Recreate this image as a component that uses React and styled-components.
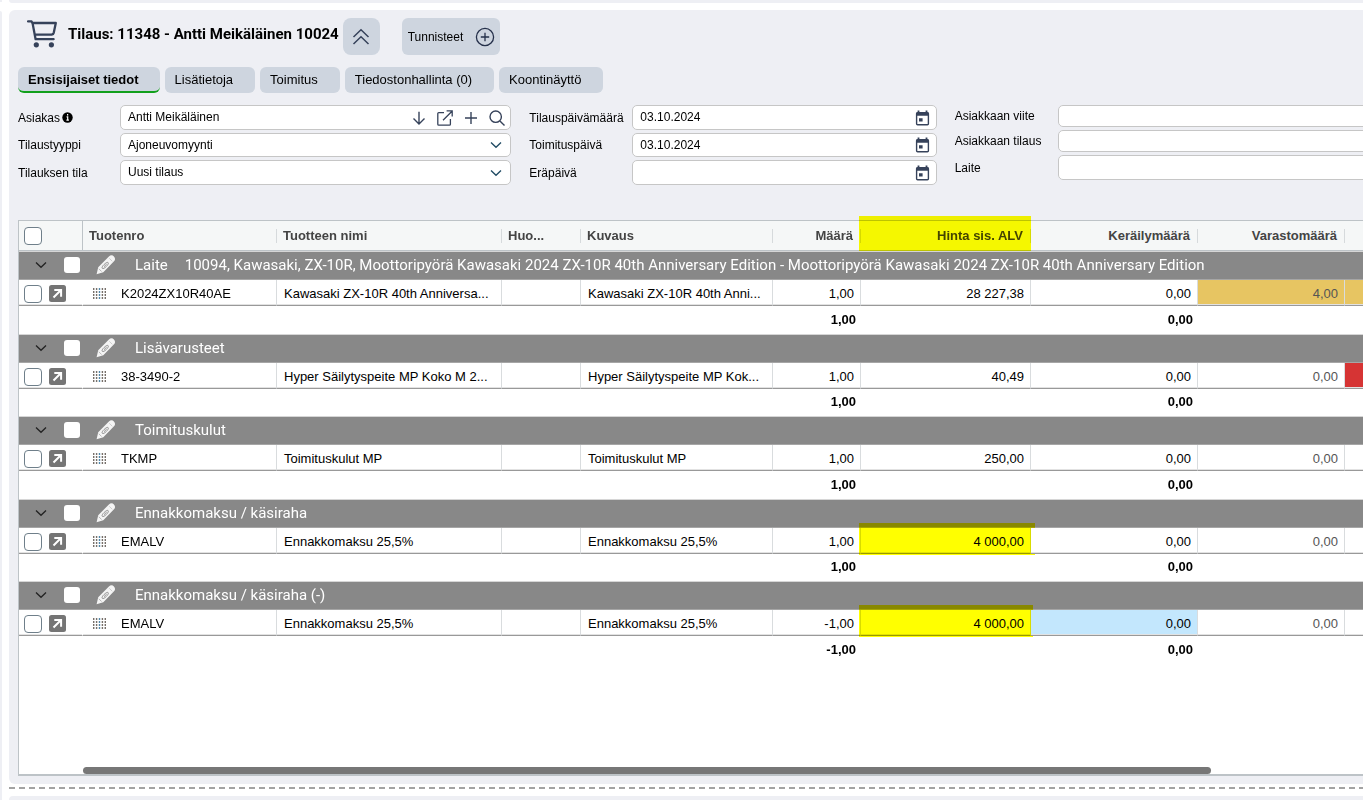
import React from "react";
import styled, { createGlobalStyle } from "styled-components";

const GlobalStyle = createGlobalStyle`
  * {
    box-sizing: border-box;
  }
  body {
    margin: 0;
    background: #fff;
    color: #000;
    font-family: "Liberation Sans", Arial, sans-serif;
    font-size: 12px;
  }
  button, input, select {
    font: inherit;
    color: inherit;
  }
`;

const tabs = [
  "Ensisijaiset tiedot",
  "Lisätietoja",
  "Toimitus",
  "Tiedostonhallinta (0)",
  "Koontinäyttö",
];

const columns = [
  { name: "Tuotenro", width: 194 },
  { name: "Tuotteen nimi", width: 225 },
  { name: "Huomautus", short: "Huo...", width: 79 },
  { name: "Kuvaus", width: 192 },
  { name: "Määrä", width: 88, right: true },
  { name: "Hinta sis. ALV", width: 170, right: true, marked: true },
  { name: "Keräilymäärä", width: 167, right: true },
  { name: "Varastomäärä", width: 147, right: true },
];

const groups = [
  {
    title: "Laite",
    info: "10094, Kawasaki, ZX-10R, Moottoripyörä Kawasaki 2024 ZX-10R 40th Anniversary Edition - Moottoripyörä Kawasaki 2024 ZX-10R 40th Anniversary Edition",
    code: "K2024ZX10R40AE",
    name: "Kawasaki ZX-10R 40th Anniversa...",
    desc: "Kawasaki ZX-10R 40th Anni...",
    amount: "1,00",
    price: "28 227,38",
    stock: "4,00",
    stockColor: "#e7c562",
    endColor: "#e7c562",
  },
  {
    title: "Lisävarusteet",
    code: "38-3490-2",
    name: "Hyper Säilytyspeite MP Koko M 2...",
    desc: "Hyper Säilytyspeite MP Kok...",
    amount: "1,00",
    price: "40,49",
    stock: "0,00",
    endColor: "#d63434",
  },
  {
    title: "Toimituskulut",
    code: "TKMP",
    name: "Toimituskulut MP",
    desc: "Toimituskulut MP",
    amount: "1,00",
    price: "250,00",
    stock: "0,00",
  },
  {
    title: "Ennakkomaksu / käsiraha",
    code: "EMALV",
    name: "Ennakkomaksu 25,5%",
    desc: "Ennakkomaksu 25,5%",
    amount: "1,00",
    price: "4 000,00",
    stock: "0,00",
    marked: true,
  },
  {
    title: "Ennakkomaksu / käsiraha (-)",
    code: "EMALV",
    name: "Ennakkomaksu 25,5%",
    desc: "Ennakkomaksu 25,5%",
    amount: "-1,00",
    price: "4 000,00",
    stock: "0,00",
    marked: true,
    pickColor: "#c3e7fd",
  },
];

const CartIcon = () => (
  <svg width="31" height="28" viewBox="0 0 31 28" fill="none" stroke="#36425a" strokeWidth="2.3" strokeLinejoin="round" strokeLinecap="round">
    <path d="M1 1.4h3.6l1 2 3 15.8h18M5.4 3h23.4l-2 9.6c-.3 1.2-.8 1.8-2 1.9L8 14.6" />
    <circle cx="9.3" cy="24.8" r="2.6" fill="#36425a" stroke="none" />
    <circle cx="24.4" cy="24.8" r="2.6" fill="#36425a" stroke="none" />
  </svg>
);

const DoubleUpIcon = () => (
  <svg width="18" height="18" viewBox="0 0 18 18" fill="none" stroke="#36425a" strokeWidth="1.5">
    <path d="M1.5 9 9 1.8 16.5 9M1.5 16 9 8.8 16.5 16" />
  </svg>
);

const CirclePlusIcon = () => (
  <svg width="20" height="20" viewBox="0 0 20 20" fill="none" stroke="#25304a" strokeWidth="1.3">
    <circle cx="10" cy="10" r="8.6" />
    <path d="M10 5.8v8.4M5.8 10h8.4" />
  </svg>
);

const InfoIcon = () => (
  <svg width="11" height="11" viewBox="0 0 11 11">
    <circle cx="5.5" cy="5.5" r="5.2" fill="#000" />
    <path d="M5.6 2v1.5M4.6 4.9h1.1v3M4.4 8.2h2.5" stroke="#fff" strokeWidth="1.2" fill="none" />
  </svg>
);

const DownIcon = () => (
  <svg width="16" height="16" viewBox="0 0 16 16" fill="none" stroke="#36425a" strokeWidth="1.4">
    <path d="M8 1.8v12M2.5 8.6 8 14l5.5-5.4" />
  </svg>
);

const OpenIcon = () => (
  <svg width="16" height="16" viewBox="0 0 16 16" fill="none" stroke="#36425a" strokeWidth="1.3">
    <path d="M7 2.6H1.800c-.6 0-1 .4-1 1v10.600c0 .6.4 1 1 1h10.600c.6 0 1-.4 1-1V9M6 10.200 15 1.200M9.600.9h5.600v5.600" />
  </svg>
);

const PlusIcon = () => (
  <svg width="16" height="16" viewBox="0 0 16 16" fill="none" stroke="#36425a" strokeWidth="1.4">
    <path d="M8 2v12M2 8h12" />
  </svg>
);

const SearchIcon = () => (
  <svg width="16" height="16" viewBox="0 0 16 16" fill="none" stroke="#36425a" strokeWidth="1.4">
    <circle cx="6.7" cy="6.7" r="5.7" />
    <path d="m10.900 10.900 4.600 4.600" />
  </svg>
);

const ChevronIcon = ({ color = "#1f4a63" }) => (
  <svg width="12" height="8" viewBox="0 0 12 8" fill="none" stroke={color} strokeWidth="1.3">
    <path d="M1 1.500 6 6.300l5-4.800" />
  </svg>
);

const CalendarIcon = () => (
  <svg width="15" height="16" viewBox="0 0 15 16" fill="none">
    <path d="M3.500.5v3M11.500.5v3" stroke="#36425a" strokeWidth="1.8" />
    <rect x="1.6" y="2.7" width="11.8" height="12" rx="1" stroke="#36425a" strokeWidth="1.4" />
    <path d="M1.500 2.500h12v3.200h-12z" fill="#36425a" />
    <path d="M4 8.200h3.600v3.400H4z" fill="#36425a" />
  </svg>
);

const PencilIcon = () => (
  <svg width="20" height="20" viewBox="0 0 20 20" fill="none">
    <path d="M.6 19.300 2.200 12.200 12.900 1.500c1.700-1.600 3.700-1.400 5-.1 1.400 1.400 1.600 3.300.1 4.900L7.300 17.300z" fill="#f4f4f4" />
    <path d="M8.100 9.500c1.400-1.400 3.200-2.700 4-1.900s-.4 2.500-1.800 3.900-3.200 2.600-4 1.800.4-2.400 1.800-3.800zM8 11.700l2.700-2.600" stroke="#888" strokeWidth=".9" />
    <path d="m13.300 3.300 3 3" stroke="#c4c4c4" strokeWidth=".8" />
    <path d="m2.800 13.800 2.800 2.700" stroke="#aaa" strokeWidth=".8" />
  </svg>
);

const RowOpenIcon = () => (
  <svg width="17" height="17" viewBox="0 0 17 17" fill="none">
    <rect width="17" height="17" rx="2.5" fill="#757575" />
    <path d="M4.500 12.500 11 6M5.300 4.900h6.800v6.800" stroke="#fff" strokeWidth="2" />
  </svg>
);

const DragIcon = () => (
  <svg width="13" height="11" viewBox="0 0 13 11" stroke="#77706a" strokeWidth="1.4" strokeDasharray="2 1">
    <path d="M.7 0v11M3.600 0v11" />
    <path d="M6.500 0v11" stroke="#4f86a8" />
    <path d="M9.400 0v11M12.300 0v11" />
  </svg>
);

const SelectField = ({ id, label, value }) => (
  <>
    <Label htmlFor={id}>{label}</Label>
    <Field>
      <Select id={id} defaultValue={value}>
        <option>{value}</option>
      </Select>
      <SelectArrow>
        <ChevronIcon />
      </SelectArrow>
    </Field>
  </>
);

const DateField = ({ id, label, value }) => (
  <>
    <Label htmlFor={id}>{label}</Label>
    <Field>
      <Input id={id} type="text" defaultValue={value} />
      <IconButton aria-label="Kalenteri">
        <CalendarIcon />
      </IconButton>
    </Field>
  </>
);

const TextField = ({ id, label }) => (
  <>
    <Label htmlFor={id}>{label}</Label>
    <Field>
      <Input id={id} type="text" />
    </Field>
  </>
);

const ProductGroup = ({ group }) => (
  <tbody>
    <tr>
      <GroupCell colSpan={columns.length + 2}>
        <GroupBar>
          <GroupToggle aria-label="Sulje ryhmä">
            <ChevronIcon color="#222" />
          </GroupToggle>
          <GroupCheck type="checkbox" aria-label={group.title} />
          <GroupEdit aria-label="Muokkaa">
            <PencilIcon />
          </GroupEdit>
          <GroupTitle>{group.title}</GroupTitle>
          <span>{group.info}</span>
        </GroupBar>
      </GroupCell>
    </tr>
    <tr>
      <Cell $plain>
        <RowTools>
          <Check type="checkbox" aria-label={group.code} />
          <RowButton aria-label="Avaa rivi">
            <RowOpenIcon />
          </RowButton>
        </RowTools>
      </Cell>
      <Cell>
        <CodeBox>
          <DragIcon />
          {group.code}
        </CodeBox>
      </Cell>
      <Cell>{group.name}</Cell>
      <Cell />
      <Cell>{group.desc}</Cell>
      <Cell $right>{group.amount}</Cell>
      <Cell $right>
        {group.price}
        {group.marked && <RowMark $wide={!group.pickColor} />}
      </Cell>
      <Cell $right $bg={group.pickColor}>
        0,00
      </Cell>
      <Cell $right $muted $bg={group.stockColor}>
        {group.stock}
      </Cell>
      <Cell $bg={group.endColor} />
    </tr>
    <TotalRow>
      <td colSpan={5} />
      <TotalCell>{group.amount}</TotalCell>
      <td />
      <TotalCell>0,00</TotalCell>
      <td colSpan={2} />
    </TotalRow>
  </tbody>
);

const App = () => {
  return (
    <Page>
      <GlobalStyle />
      <SideColumn>
        <SideTop />
        <SidePanel />
      </SideColumn>
      <Main>
        <TopPanel />
        <Panel>
          <Header>
            <CartIcon />
            <Title>Tilaus: 11348 - Antti Meikäläinen 10024</Title>
            <CollapseButton aria-label="Pienennä">
              <DoubleUpIcon />
            </CollapseButton>
            <TagButton>
              Tunnisteet
              <CirclePlusIcon />
            </TagButton>
          </Header>
          <Tabs>
            {tabs.map((tab, i) => (
              <Tab key={tab} $active={i === 0}>
                {tab}
              </Tab>
            ))}
          </Tabs>
          <Form>
            <FieldGroup $label={102}>
              <Label htmlFor="customer">
                Asiakas
                <InfoIcon />
              </Label>
              <Field>
                <Input id="customer" type="text" defaultValue="Antti Meikäläinen" />
                <IconButton aria-label="Valitse">
                  <DownIcon />
                </IconButton>
                <IconButton aria-label="Avaa">
                  <OpenIcon />
                </IconButton>
                <IconButton aria-label="Lisää">
                  <PlusIcon />
                </IconButton>
                <IconButton aria-label="Hae">
                  <SearchIcon />
                </IconButton>
              </Field>
              <SelectField id="type" label="Tilaustyyppi" value="Ajoneuvomyynti" />
              <SelectField id="state" label="Tilauksen tila" value="Uusi tilaus" />
            </FieldGroup>
            <FieldGroup $label={103}>
              <DateField id="ordered" label="Tilauspäivämäärä" value="03.10.2024" />
              <DateField id="delivery" label="Toimituspäivä" value="03.10.2024" />
              <DateField id="due" label="Eräpäivä" value="" />
            </FieldGroup>
            <FieldGroup $label={103} $compact>
              <TextField id="reference" label="Asiakkaan viite" />
              <TextField id="customerOrder" label="Asiakkaan tilaus" />
              <TextField id="device" label="Laite" />
            </FieldGroup>
          </Form>
          <Grid>
            <Table>
              <colgroup>
                <Col $width={64} />
                {columns.map((col) => (
                  <Col key={col.name} $width={col.width} />
                ))}
                <col />
              </colgroup>
              <thead>
                <tr>
                  <HeadCell $first>
                    <RowTools>
                      <Check type="checkbox" aria-label="Valitse kaikki" />
                    </RowTools>
                  </HeadCell>
                  {columns.map((col) => (
                    <HeadCell key={col.name}>
                      <HeadLabel $right={col.right}>{col.short || col.name}</HeadLabel>
                      {col.marked && <HeadMark />}
                    </HeadCell>
                  ))}
                  <HeadCell />
                </tr>
              </thead>
              {groups.map((group) => (
                <ProductGroup key={group.title} group={group} />
              ))}
            </Table>
            <ScrollTrack>
              <ScrollThumb />
            </ScrollTrack>
          </Grid>
        </Panel>
        <Splitter />
        <BottomPanel />
      </Main>
    </Page>
  );
};

const Page = styled.div`
  display: flex;
  gap: 7px;
  height: 100vh;
  min-height: 720px;
  overflow: hidden;
`;

const SideColumn = styled.div`
  display: flex;
  flex-direction: column;
  gap: 9px;
  width: 2px;
`;

const SideTop = styled.div`
  height: 2px;
  background: #eeeff4;
`;

const SidePanel = styled.div`
  flex: 1;
  background: #eeeff4;
  border-top-right-radius: 2px;
`;

const Main = styled.main`
  flex: 1;
  min-width: 0;
  display: flex;
  flex-direction: column;
`;

const TopPanel = styled.div`
  height: 3px;
  background: #eeeff4;
  border-bottom-left-radius: 3px;
`;

const Panel = styled.section`
  flex: 1;
  display: flex;
  flex-direction: column;
  margin-top: 7px;
  padding: 8px 0 8px 9px;
  background: #eeeff4;
  border-radius: 6px 0 0 6px;
  overflow: hidden;
`;

const Header = styled.header`
  display: flex;
  align-items: center;
  padding-left: 9px;

  > svg {
    margin: 0 10px 5px 0;
  }
`;

const Title = styled.h1`
  margin: 0;
  padding: 0 4px 5px 0;
  font: bold 15px "Roboto", sans-serif;
  white-space: nowrap;
`;

const HeaderButton = styled.button`
  display: flex;
  align-items: center;
  height: 37px;
  border: 0;
  border-radius: 6px;
  background: #ced5df;
`;

const CollapseButton = styled(HeaderButton)`
  justify-content: center;
  width: 37px;
  padding: 0;
  border-radius: 8px;
`;

const TagButton = styled(HeaderButton)`
  gap: 12px;
  margin-left: 22px;
  padding: 0 5px 0 6px;
`;

const Tabs = styled.nav`
  display: flex;
  gap: 5px;
  margin-top: 12px;
`;

const Tab = styled.button`
  height: 26px;
  padding: 0 ${(p) => (p.$active ? 21 : 22)}px 0 10px;
  border: 0;
  border-bottom: 2px solid ${(p) => (p.$active ? "#12a01c" : "#ced5df")};
  border-radius: 6px;
  background: #ced5df;
  font-size: 13px;
  font-weight: ${(p) => (p.$active ? "bold" : "normal")};
  white-space: nowrap;
`;

const Form = styled.form`
  display: grid;
  grid-template-columns: 493fr 407fr 418fr;
  gap: 18px;
  margin: 12px -10px 0 0;
`;

const FieldGroup = styled.div`
  display: grid;
  grid-template-columns: ${(p) => p.$label}px 1fr;
  grid-template-rows: ${(p) => (p.$compact ? "22px 22px 25px" : "25px 24px 25px")};
  align-content: start;
  row-gap: 3px;
`;

const Label = styled.label`
  display: flex;
  align-items: center;
  gap: 2px;
  white-space: nowrap;
`;

const Field = styled.div`
  display: grid;
  grid-template-columns: 1fr;
  grid-auto-columns: 26px;
  grid-auto-flow: column;
  min-width: 0;
  border: 1px solid #c6c6c6;
  border-radius: 5px;
  background: #fff;
`;

const Input = styled.input`
  min-width: 0;
  padding: 0 0 1px 7px;
  border: 0;
  background: none;
  outline: none;
`;

const Select = styled.select`
  grid-column: 1 / 3;
  grid-row: 1;
  padding: 0 0 1px 7px;
  border: 0;
  background: none;
  outline: none;
  appearance: none;
`;

const SelectArrow = styled.span`
  grid-column: 2;
  grid-row: 1;
  display: flex;
  align-items: center;
  justify-content: center;
  padding-right: 2px;
  pointer-events: none;
`;

const IconButton = styled.button.attrs({ type: "button" })`
  display: flex;
  align-items: center;
  justify-content: center;
  padding: 0;
  border: 0;
  background: none;
`;

const Grid = styled.div`
  flex: 1;
  display: flex;
  flex-direction: column;
  justify-content: space-between;
  margin: 35px -10px 0 0;
  border: 1px solid #bdc3c7;
  border-bottom-width: 2px;
  background: #fff;
`;

const Table = styled.table`
  width: 100%;
  min-width: 1340px;
  table-layout: fixed;
  border-collapse: separate;
  border-spacing: 0;
  font-size: 13px;

  td,
  th {
    padding: 0;
  }
  tbody:nth-of-type(even) tr:last-child {
    height: 27px;
  }
`;

const Col = styled.col`
  width: ${(p) => p.$width}px;
`;

const HeadCell = styled.th`
  position: relative;
  height: 30px;
  background: #f5f7f7;
  border-bottom: 1px solid #bdc3c7;
  border-right: ${(p) => (p.$first ? "1px solid #bdc3c7" : "0")};
`;

const HeadLabel = styled.div`
  height: 14px;
  padding: 0 7px 0 6px;
  border-right: 1px solid #d6dadc;
  color: #444;
  line-height: 14px;
  text-align: ${(p) => (p.$right ? "right" : "left")};
`;

// highlighter strokes lie over the cells and spill a little past them
const Mark = styled.span`
  position: absolute;
  background: #ff0;
  mix-blend-mode: multiply;
  pointer-events: none;
`;

const HeadMark = styled(Mark)`
  inset: -5px 0 -1px -2px;
`;

const RowMark = styled(Mark)`
  inset: -5px ${(p) => (p.$wide ? "-5px" : "-3px")} -2px -2px;
`;

const GroupCell = styled.td`
  height: 29px;
  background: #888;
  border-top: 1px solid #d6d6d6;
  border-bottom: 1px solid #a6a6a6;
`;

const GroupBar = styled.div`
  display: flex;
  align-items: center;
  padding-bottom: 2px;
  color: #fff;
  font: 15px "Roboto", sans-serif;
  line-height: 20px;
  white-space: nowrap;
`;

const GroupToggle = styled(IconButton)`
  width: 45px;
  padding-right: 2px;
`;

const Check = styled.input`
  width: 18px;
  height: 18px;
  margin: 0;
  border: 1px solid #6f7f8a;
  border-radius: 4px;
  background: #fff;
  appearance: none;
`;

const GroupCheck = styled(Check)`
  width: 16px;
  height: 16px;
  border: 0;
  border-radius: 3px;
`;

const GroupEdit = styled(IconButton)`
  width: 54px;
  padding-right: 2px;
`;

const GroupTitle = styled.span`
  margin: 0 17px 0 1px;
`;

const Cell = styled.td`
  position: relative;
  height: 26px;
  && {
    padding: ${(p) => (p.$plain ? "2px 0 0" : "2px 6px 0 7px")};
  }
  border-right: 1px solid ${(p) => (p.$plain ? "transparent" : "#d9dcde")};
  border-bottom: 1px solid #999;
  box-shadow: inset 0 -1px #e2e2e2;
  background: ${(p) => p.$bg || "#fff"};
  color: ${(p) => (p.$muted ? "#555" : "#000")};
  text-align: ${(p) => (p.$right ? "right" : "left")};
  white-space: nowrap;
`;

const RowTools = styled.div`
  display: flex;
  align-items: center;
  gap: 7px;
  padding-left: 5px;
`;

const RowButton = styled(IconButton)`
  width: 17px;
`;

const CodeBox = styled.div`
  display: flex;
  align-items: center;
  gap: 15px;
  padding-left: 3px;
`;

const TotalRow = styled.tr`
  height: 28px;
  font-weight: bold;
`;

const TotalCell = styled.td`
  && {
    padding: 0 5px 2px 0;
  }
  text-align: right;
`;

const ScrollTrack = styled.div`
  padding-left: 64px;
`;

const ScrollThumb = styled.div`
  width: 87.5%;
  height: 7px;
  border-radius: 4px;
  background: #777;
`;

const Splitter = styled.div`
  height: 2px;
  margin: 3px 0 7px;
  background: repeating-linear-gradient(90deg, #a3a3a3 0 6px, #fff 6px 10px);
`;

const BottomPanel = styled.div`
  height: 4px;
  background: #eeeff4;
  border-top-left-radius: 4px;
`;

export default App;
